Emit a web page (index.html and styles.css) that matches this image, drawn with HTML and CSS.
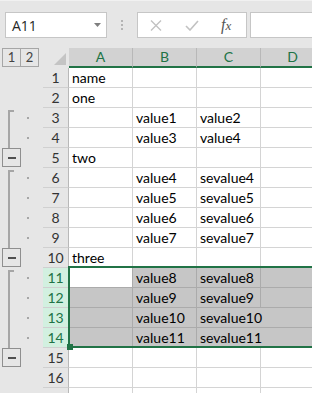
FILE: index.html
```html
<!DOCTYPE html>
<html lang="en">
  <head>
    <meta charset="utf-8" />
    <title>Sheet outline</title>
    <link rel="stylesheet" href="styles.css">
  </head>
  <body>
    <div class="topbar">
      <div class="namebox">
        <span>A11</span>
        <svg class="caret" width="7" height="4" viewBox="0 0 7 4"><path d="M0 0h7L3.5 4z" fill="#7f7f7f"/></svg>
      </div>
      <div class="grip"><i></i><i></i><i></i></div>
      <div class="fxbox">
        <svg class="cancel" width="12" height="11" viewBox="0 0 12 11"><path d="M1 0.5l10 10M11 0.5l-10 10" stroke="#c2c2c2" stroke-width="1.4" fill="none"/></svg>
        <svg class="enter" width="14" height="11" viewBox="0 0 14 11"><path d="M1 6l4 4L13 1" stroke="#c2c2c2" stroke-width="1.6" fill="none"/></svg>
        <span class="fx">f<span class="fx-x">x</span></span>
      </div>
      <div class="formula"></div>
    </div>

    <div class="sheet">
      <div class="row head">
        <div class="levels"><span class="lvl">1</span><span class="lvl">2</span></div>
        <div class="corner"><svg width="12" height="12" viewBox="0 0 12 12"><path d="M12 0v12H0z" fill="#c4c4c4"/></svg></div>
        <div class="colhead">A</div>
        <div class="colhead">B</div>
        <div class="colhead">C</div>
        <div class="colhead">D</div>
      </div>

      <div class="row">
        <div class="ol"></div>
        <div class="rh">1</div>
        <div class="c">name</div><div class="c"></div><div class="c"></div><div class="c"></div>
      </div>
      <div class="row">
        <div class="ol"></div>
        <div class="rh">2</div>
        <div class="c">one</div><div class="c"></div><div class="c"></div><div class="c"></div>
      </div>
      <div class="row">
        <div class="ol"><span class="br top"></span><span class="dot"></span></div>
        <div class="rh">3</div>
        <div class="c"></div><div class="c">value1</div><div class="c">value2</div><div class="c"></div>
      </div>
      <div class="row">
        <div class="ol"><span class="br"></span><span class="dot"></span></div>
        <div class="rh">4</div>
        <div class="c"></div><div class="c">value3</div><div class="c">value4</div><div class="c"></div>
      </div>
      <div class="row">
        <div class="ol"><span class="minus"></span></div>
        <div class="rh">5</div>
        <div class="c">two</div><div class="c"></div><div class="c"></div><div class="c"></div>
      </div>
      <div class="row">
        <div class="ol"><span class="br top"></span><span class="dot"></span></div>
        <div class="rh">6</div>
        <div class="c"></div><div class="c">value4</div><div class="c">sevalue4</div><div class="c"></div>
      </div>
      <div class="row">
        <div class="ol"><span class="br"></span><span class="dot"></span></div>
        <div class="rh">7</div>
        <div class="c"></div><div class="c">value5</div><div class="c">sevalue5</div><div class="c"></div>
      </div>
      <div class="row">
        <div class="ol"><span class="br"></span><span class="dot"></span></div>
        <div class="rh">8</div>
        <div class="c"></div><div class="c">value6</div><div class="c">sevalue6</div><div class="c"></div>
      </div>
      <div class="row">
        <div class="ol"><span class="br"></span><span class="dot"></span></div>
        <div class="rh">9</div>
        <div class="c"></div><div class="c">value7</div><div class="c">sevalue7</div><div class="c"></div>
      </div>
      <div class="row">
        <div class="ol"><span class="minus"></span></div>
        <div class="rh">10</div>
        <div class="c">three</div><div class="c"></div><div class="c"></div><div class="c"></div>
      </div>
      <div class="row sel">
        <div class="ol"><span class="br top"></span><span class="dot"></span></div>
        <div class="rh">11</div>
        <div class="c active"></div><div class="c">value8</div><div class="c">sevalue8</div><div class="c"></div>
      </div>
      <div class="row sel">
        <div class="ol"><span class="br"></span><span class="dot"></span></div>
        <div class="rh">12</div>
        <div class="c"></div><div class="c">value9</div><div class="c">sevalue9</div><div class="c"></div>
      </div>
      <div class="row sel">
        <div class="ol"><span class="br"></span><span class="dot"></span></div>
        <div class="rh">13</div>
        <div class="c"></div><div class="c">value10</div><div class="c wide">sevalue10</div>
      </div>
      <div class="row sel">
        <div class="ol"><span class="br"></span><span class="dot"></span></div>
        <div class="rh">14</div>
        <div class="c"></div><div class="c">value11</div><div class="c wide">sevalue11</div>
      </div>
      <div class="row">
        <div class="ol"><span class="minus"></span></div>
        <div class="rh">15</div>
        <div class="c"></div><div class="c"></div><div class="c"></div><div class="c"></div>
      </div>
      <div class="row">
        <div class="ol"></div>
        <div class="rh">16</div>
        <div class="c"></div><div class="c"></div><div class="c"></div><div class="c"></div>
      </div>
      <div class="row">
        <div class="ol"></div>
        <div class="rh"></div>
        <div class="c"></div><div class="c"></div><div class="c"></div><div class="c"></div>
      </div>

      <!-- selection A11:D14 drawn over the grid -->
      <div class="selection"><span class="handle"></span></div>
    </div>
  </body>
</html>
```

FILE: styles.css
```css
body {
  margin: 0;
  width: 312px;
  height: 393px;
  overflow: hidden;
  background: #fff;
  font-family: Lato, 'Liberation Sans', sans-serif;
}

/* formula bar */

.topbar {
  height: 48px;
  box-sizing: border-box;
  background: #e6e6e6;
  border-top: 1px solid #f1f1f1;
  padding: 11px 0 0 5px;
  display: flex;
  align-items: flex-start;
}

.namebox {
  width: 102px;
  height: 26px;
  box-sizing: border-box;
  flex-shrink: 0;
  background: #fff;
  border: 1px solid #c6c6c6;
  display: flex;
  align-items: center;
  justify-content: space-between;
  padding: 0 5px 0 6px;
  font-family: 'Open Sans', 'Liberation Sans', sans-serif;
  font-size: 14px;
  color: #262626;
}

.grip {
  margin: 8px 0 0 14px;
  display: flex;
  flex-direction: column;
  gap: 2px;
}

.grip i {
  width: 2px;
  height: 2px;
  background: #b4b4b4;
}

.fxbox {
  margin-left: 14px;
  width: 110px;
  height: 26px;
  box-sizing: border-box;
  flex-shrink: 0;
  background: #fff;
  border: 1px solid #c6c6c6;
  display: flex;
  align-items: center;
}

.cancel {
  margin-left: 12px;
}

.enter {
  margin-left: 23px;
}

.fx {
  margin-left: 22px;
  font-family: 'Liberation Serif', serif;
  font-style: italic;
  font-size: 16px;
  color: #555;
}

.fx-x {
  font-size: 13px;
}

.formula {
  margin-left: 3px;
  width: 100px;
  height: 26px;
  box-sizing: border-box;
  flex-shrink: 0;
  background: #fff;
  border: 1px solid #c6c6c6;
}

/* grid */

.sheet {
  position: relative;
  font-size: 14px;
}

.row {
  display: grid;
  grid-template-columns: 43px 26px 64px 64px 64px 64px;
  height: 20px;
}

.head {
  background: #e6e6e6;
}

.levels {
  display: flex;
  padding-left: 2px;
}

.lvl {
  width: 19px;
  height: 19px;
  box-sizing: border-box;
  border: 1px solid #a6a6a6;
  text-align: center;
  line-height: 17px;
  font-size: 13px;
  color: #444;
}

.lvl + .lvl {
  margin-left: -1px;
}

.corner {
  display: flex;
  justify-content: flex-end;
  align-items: flex-end;
  padding: 0 3px 3px 0;
}

.colhead {
  background: #d2d2d2;
  border-right: 1px solid #b8b8b8;
  border-bottom: 2px solid #217346;
  color: #217346;
  text-align: center;
  line-height: 18px;
}

.ol {
  background: #e6e6e6;
  display: flex;
}

.br {
  margin-left: 8px;
  width: 4px;
  border-left: 2px solid #a6a6a6;
}

.br.top {
  margin-top: 2px;
  border-top: 2px solid #a6a6a6;
}

.dot {
  width: 2px;
  height: 2px;
  margin-left: 13px;
  align-self: center;
  background: #a6a6a6;
}

.minus {
  margin-left: 2px;
  width: 19px;
  height: 19px;
  box-sizing: border-box;
  border: 1px solid #8f8f8f;
  display: flex;
  align-items: center;
  justify-content: center;
}

.minus::after {
  content: "";
  width: 8px;
  height: 2px;
  background: #505050;
}

.rh {
  background: #e6e6e6;
  border-right: 1px solid #b8b8b8;
  border-bottom: 1px solid #d0d0d0;
  text-align: center;
  line-height: 19px;
  color: #333;
}

.c {
  border-right: 1px solid #d4d4d4;
  border-bottom: 1px solid #d4d4d4;
  padding-left: 3px;
  line-height: 19px;
  white-space: nowrap;
  color: #000;
}

.c.wide {
  grid-column: span 2;
}

.sel .rh {
  background: #d2f0e0;
  color: #217346;
}

.sel .c {
  background: #c6c6c6;
  border-color: #ababab;
}

.sel .c.active {
  background: #fff;
}

.selection {
  position: absolute;
  left: 68px;
  top: 218px;
  width: 300px;
  height: 82px;
  box-sizing: border-box;
  border: 2px solid #217346;
  border-right: none;
}

.handle {
  position: absolute;
  left: -3px;
  bottom: -4px;
  width: 6px;
  height: 6px;
  background: #217346;
}
```
